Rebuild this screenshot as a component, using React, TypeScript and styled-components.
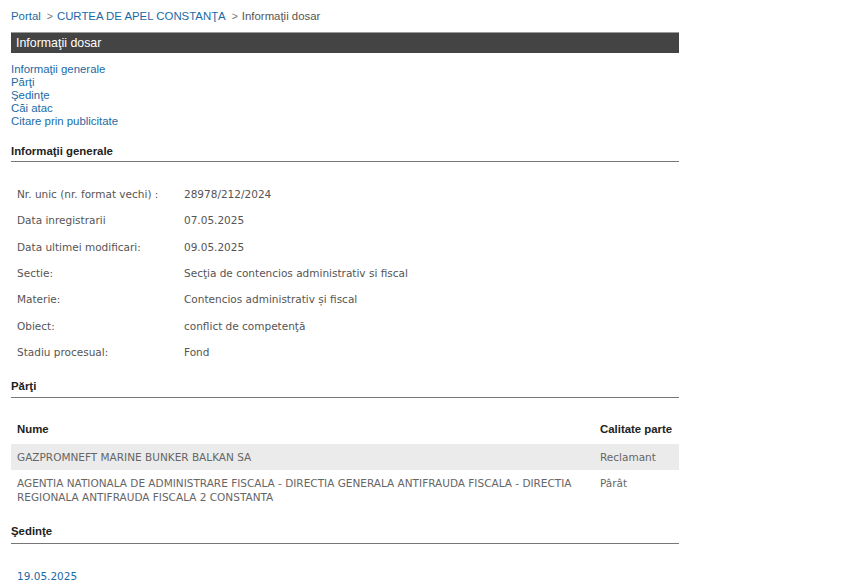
import styled, { createGlobalStyle } from 'styled-components';

const GlobalStyle = createGlobalStyle`
  html, body {
    margin: 0;
    padding: 0;
    background: #fff;
  }
  body {
    font-family: 'Liberation Sans', Arial, sans-serif;
    font-size: 11.4px;
    color: #333;
  }
`;

const generalInfo: [string, string][] = [
  ['Nr. unic (nr. format vechi) :', '28978/212/2024'],
  ['Data inregistrarii', '07.05.2025'],
  ['Data ultimei modificari:', '09.05.2025'],
  ['Sectie:', 'Secţia de contencios administrativ si fiscal'],
  ['Materie:', 'Contencios administrativ și fiscal'],
  ['Obiect:', 'conflict de competenţă'],
  ['Stadiu procesual:', 'Fond'],
];

const parties: { name: string; role: string }[] = [
  { name: 'GAZPROMNEFT MARINE BUNKER BALKAN SA', role: 'Reclamant' },
  {
    name: 'AGENTIA NATIONALA DE ADMINISTRARE FISCALA - DIRECTIA GENERALA ANTIFRAUDA FISCALA - DIRECTIA REGIONALA ANTIFRAUDA FISCALA 2 CONSTANTA',
    role: 'Pârât',
  },
];

export default function App() {
  return (
    <Page>
      <GlobalStyle />
      <Breadcrumb>
        <Link href="#">Portal</Link>
        <Sep>&gt;</Sep>
        <Link href="#">CURTEA DE APEL CONSTANŢA</Link>
        <Sep>&gt;</Sep>
        <Current>Informaţii dosar</Current>
      </Breadcrumb>

      <TitleBar>Informaţii dosar</TitleBar>

      <NavList>
        <Link href="#">Informaţii generale</Link>
        <Link href="#">Părţi</Link>
        <Link href="#">Şedinţe</Link>
        <Link href="#">Căi atac</Link>
        <Link href="#">Citare prin publicitate</Link>
      </NavList>

      <SectionHeading $gap={16}>Informaţii generale</SectionHeading>
      <InfoTable>
        <tbody>
          {generalInfo.map(([label, value]) => (
            <tr key={label}>
              <LabelCell>{label}</LabelCell>
              <ValueCell>{value}</ValueCell>
            </tr>
          ))}
        </tbody>
      </InfoTable>

      <SectionHeading $gap={14} $pad={3}>Părţi</SectionHeading>
      <PartyTable>
        <colgroup>
          <col />
          <col style={{ width: 85 }} />
        </colgroup>
        <thead>
          <tr>
            <HeadCell>Nume</HeadCell>
            <HeadCell>Calitate parte</HeadCell>
          </tr>
        </thead>
        <tbody>
          {parties.map((p, i) => (
            <PartyRow key={p.name} $shaded={i % 2 === 0}>
              <PartyCell>{p.name}</PartyCell>
              <PartyCell>{p.role}</PartyCell>
            </PartyRow>
          ))}
        </tbody>
      </PartyTable>

      <SectionHeading $gap={14} $pad={4}>Şedinţe</SectionHeading>
      <HearingDate href="#">19.05.2025</HearingDate>
    </Page>
  );
}

/* STYLES **********************************************************/

const Page = styled.div`
  width: 668px;
  padding: 9px 0 0 11px;
`;

const Link = styled.a`
  color: #1b6aa5;
  text-decoration: none;
  font-size: 11.4px;
  line-height: 13px;
`;

const Breadcrumb = styled.div`
  display: flex;
  align-items: baseline;
  height: 15px;
  line-height: 15px;
`;

const Sep = styled.span`
  color: #777;
  margin: 0 4px 0 6px;
  font-size: 10.5px;
`;

const Current = styled.span`
  color: #555;
`;

const TitleBar = styled.div`
  margin-top: 8px;
  height: 20px;
  background: #444;
  border-top: 1px solid #9a9a9a;
  color: #fff;
  font-size: 12.4px;
  line-height: 20px;
  padding-left: 5px;
`;

const NavList = styled.div`
  display: flex;
  flex-direction: column;
  margin-top: 10px;
`;

const SectionHeading = styled.div<{ $gap: number; $pad?: number }>`
  margin-top: ${(p) => p.$gap}px;
  padding-bottom: ${(p) => p.$pad ?? 2}px;
  border-bottom: 1px solid #777;
  color: #222;
  font-weight: bold;
  line-height: 15px;
`;

const InfoTable = styled.table`
  border-collapse: collapse;
  margin-top: 19px;
  font-family: 'DejaVu Sans', Tahoma, sans-serif;
  font-size: 10.5px;
  color: #555;
`;

const LabelCell = styled.td`
  width: 167px;
  padding: 0 0 0 6px;
  height: 26.3px;
  vertical-align: middle;
`;

const ValueCell = styled.td`
  padding: 0;
  vertical-align: middle;
`;

const PartyTable = styled.table`
  width: 100%;
  table-layout: fixed;
  border-collapse: collapse;
  margin-top: 24px;
`;

const HeadCell = styled.th`
  text-align: left;
  font-weight: bold;
  color: #222;
  white-space: nowrap;
  padding: 0 6px 8px;
  line-height: 14px;
`;

const PartyRow = styled.tr<{ $shaded: boolean }>`
  background: ${(p) => (p.$shaded ? '#ebebeb' : 'transparent')};
`;

const PartyCell = styled.td`
  font-family: 'DejaVu Sans', Tahoma, sans-serif;
  font-size: 10.5px;
  color: #666;
  line-height: 14px;
  padding: 6px;
  vertical-align: top;
`;

const HearingDate = styled.a`
  display: inline-block;
  margin: 26px 0 0 6px;
  color: #1b6aa5;
  text-decoration: none;
  font-family: 'DejaVu Sans', Tahoma, sans-serif;
  font-size: 10.5px;
`;
